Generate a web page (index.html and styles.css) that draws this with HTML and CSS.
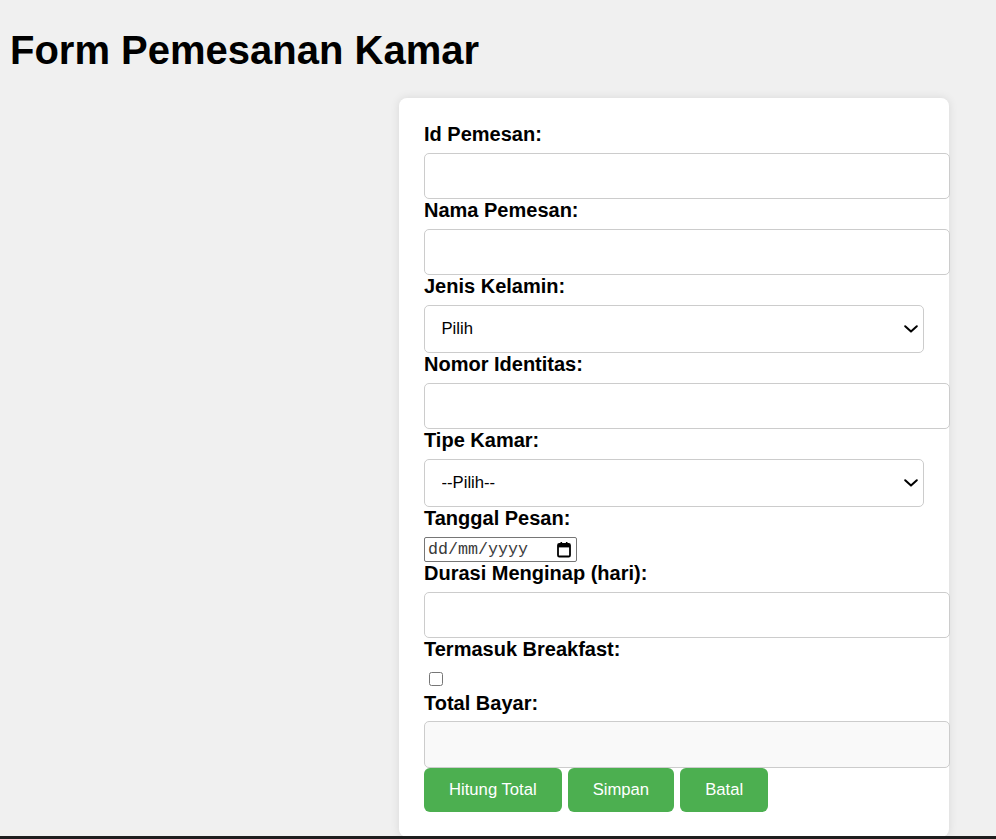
FILE: index.html
```html
<!DOCTYPE html>
<html lang="id">
<head>
<meta charset="utf-8">
<title>Form Pemesanan Kamar</title>
<link rel="stylesheet" href="styles.css">
</head>
<body>
<h1 class="title">Form Pemesanan Kamar</h1>
<form class="booking">
  <label class="field-label" for="id">Id Pemesan:</label>
  <input class="text-input" type="text" id="id">
  <label class="field-label" for="nama">Nama Pemesan:</label>
  <input class="text-input" type="text" id="nama">
  <label class="field-label" for="jk">Jenis Kelamin:</label>
  <div class="select-wrap">
    <select class="select-input" id="jk"><option>Pilih</option><option>Laki-laki</option><option>Perempuan</option></select>
    <svg class="chevron" width="14" height="8" viewBox="0 0 14 8"><path d="M1.2 1.2 L7 6.6 L12.8 1.2" fill="none" stroke="#000" stroke-width="2" stroke-linecap="round" stroke-linejoin="round"/></svg>
  </div>
  <label class="field-label" for="nik">Nomor Identitas:</label>
  <input class="text-input" type="text" id="nik">
  <label class="field-label" for="tipe">Tipe Kamar:</label>
  <div class="select-wrap">
    <select class="select-input" id="tipe"><option>--Pilih--</option><option>Standar</option><option>Deluxe</option><option>Family</option></select>
    <svg class="chevron" width="14" height="8" viewBox="0 0 14 8"><path d="M1.2 1.2 L7 6.6 L12.8 1.2" fill="none" stroke="#000" stroke-width="2" stroke-linecap="round" stroke-linejoin="round"/></svg>
  </div>
  <label class="field-label" for="tgl">Tanggal Pesan:</label>
  <div class="date-field">
    <input class="date-text" type="text" id="tgl" placeholder="dd/mm/yyyy">
    <svg class="cal-icon" width="16" height="17" viewBox="0 0 16 17"><rect x="2" y="3" width="12" height="12.5" rx="1.3" fill="none" stroke="#000" stroke-width="1.8"/><rect x="2" y="3" width="12" height="3.4" fill="#000"/><rect x="4.5" y="1" width="1.6" height="3" fill="#000"/><rect x="9.9" y="1" width="1.6" height="3" fill="#000"/></svg>
  </div>
  <label class="field-label" for="durasi">Durasi Menginap (hari):</label>
  <input class="text-input" type="number" id="durasi">
  <label class="field-label" for="bf">Termasuk Breakfast:</label>
  <input class="check-input" type="checkbox" id="bf">
  <label class="field-label" for="total">Total Bayar:</label>
  <input class="text-input readonly" type="text" id="total" readonly>
  <div class="actions">
    <button class="btn" type="button">Hitung Total</button>
    <button class="btn" type="submit">Simpan</button>
    <button class="btn" type="reset">Batal</button>
  </div>
</form>
<div class="screen-edge"></div>
</body>
</html>
```
FILE: styles.css
```css
html, body {
  margin: 0;
}
body {
  padding: 10px;
  background: #f0f0f0;
  font-family: "Liberation Sans", Arial, sans-serif;
  color: #000;
}
.title {
  font-size: 40px;
  font-weight: bold;
  line-height: 46px;
  margin: 17px 0 25px;
}
.booking {
  width: 500px;
  margin-left: 389px;
  padding: 25px;
  background: #fff;
  border-radius: 8px;
  box-shadow: 0 0 10px rgba(0, 0, 0, 0.1);
}
.field-label {
  display: block;
  font-size: 20px;
  line-height: 23px;
  font-weight: bold;
}
.text-input {
  display: block;
  box-sizing: border-box;
  width: 526px;
  height: 46.5px;
  margin: 6.5px 0 0;
  padding: 0 12.5px;
  border: 1px solid #ccc;
  border-radius: 5px;
  background: #fff;
  font-family: "Liberation Sans", Arial, sans-serif;
  font-size: 16.67px;
  outline: none;
}
.text-input.readonly {
  background: #f9f9f9;
}
.select-wrap {
  position: relative;
  width: 500px;
  margin: 6.5px 0 0;
}
.select-input {
  display: block;
  box-sizing: border-box;
  width: 500px;
  height: 48.5px;
  margin: 0;
  padding: 0 12.5px 0 16.5px;
  border: 1px solid #ccc;
  border-radius: 5px;
  background: #fff;
  color: #000;
  font-family: "Liberation Sans", Arial, sans-serif;
  font-size: 16.67px;
  appearance: none;
  -webkit-appearance: none;
  outline: none;
}
.chevron {
  position: absolute;
  right: 6px;
  top: 20px;
  pointer-events: none;
}
.date-field {
  display: flex;
  align-items: center;
  box-sizing: border-box;
  width: 153px;
  height: 25.5px;
  margin: 6.5px 0 0;
  padding: 0 4px 0 3px;
  border: 1px solid #767676;
  border-radius: 2px;
  background: #fff;
}
.date-text {
  flex: 1;
  min-width: 0;
  border: none;
  padding: 0;
  margin: 0;
  background: transparent;
  font-family: "Liberation Mono", "Courier New", monospace;
  font-size: 16.67px;
  color: #000;
  outline: none;
}
.date-text::placeholder {
  color: #3a3a3a;
  opacity: 1;
}
.cal-icon {
  flex: none;
}
.check-input {
  display: block;
  width: 14px;
  height: 14px;
  margin: 10.5px 0 6px 5px;
}
.actions {
  display: flex;
  gap: 6px;
}
.btn {
  height: 44px;
  padding: 0 25px;
  border: none;
  border-radius: 6px;
  background: #4caf50;
  color: #fff;
  font-family: "Liberation Sans", Arial, sans-serif;
  font-size: 16.67px;
  cursor: pointer;
}
.screen-edge {
  position: fixed;
  left: 0;
  right: 0;
  bottom: 0;
  height: 3px;
  background: #1e1e1e;
}
```
